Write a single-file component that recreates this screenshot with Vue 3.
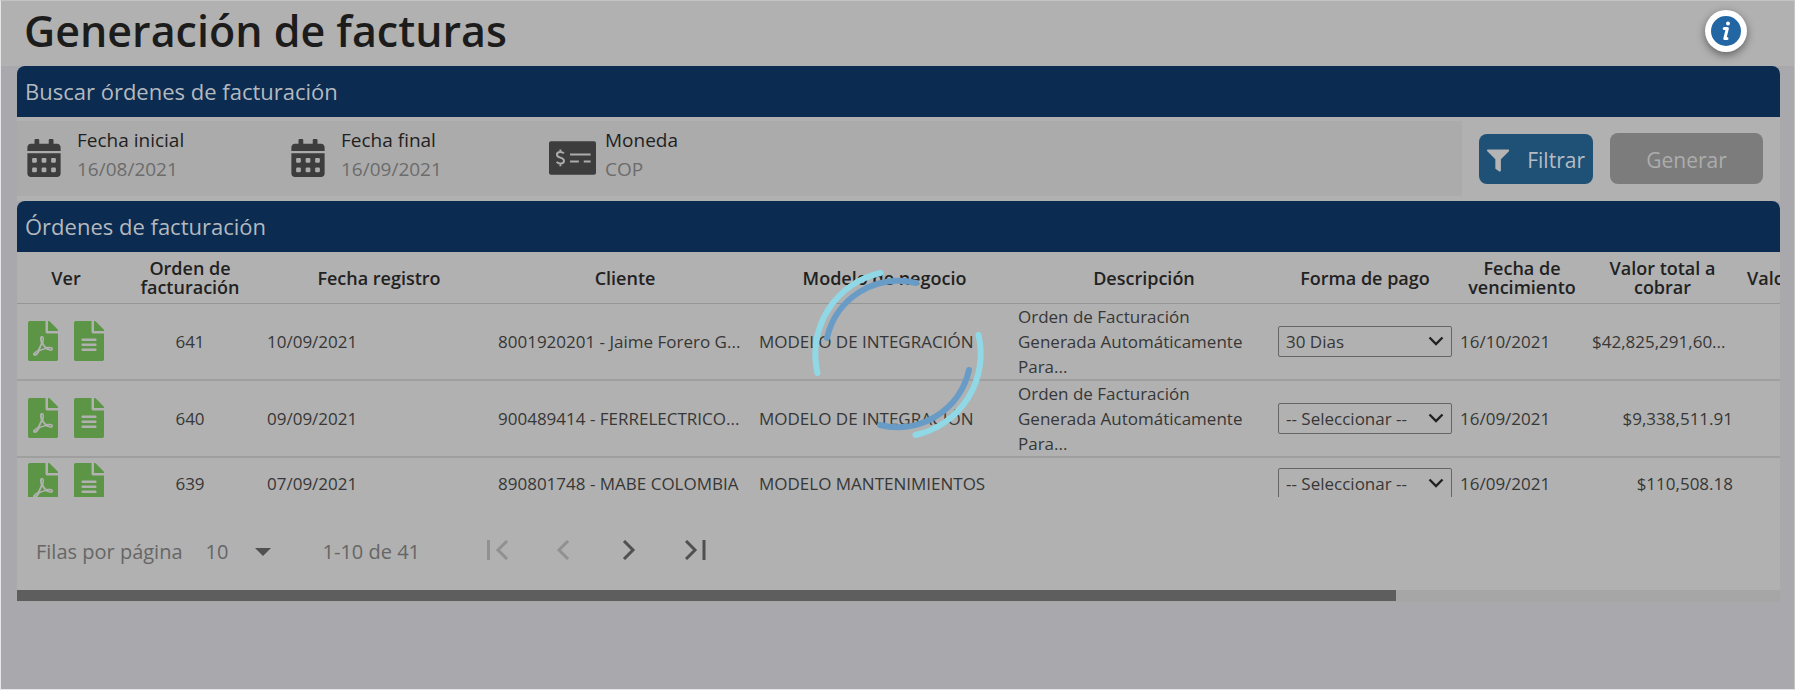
<script setup>
import { ref } from 'vue'

const filePdf = 'M181.9 256.1c-5-16-4.9-46.9-2-46.9 8.4 0 7.6 36.9 2 46.9zm-1.7 47.2c-7.7 20.2-17.3 43.3-28.4 62.7 18.3-7 39-17.2 62.9-21.9-12.7-9.6-24.9-23.4-34.5-40.8zM86.1 428.1c0 .8 13.2-5.4 34.9-40.2-6.7 6.3-29.1 24.5-34.9 40.2zM248 160h136v328c0 13.3-10.7 24-24 24H24c-13.3 0-24-10.7-24-24V24C0 10.7 10.7 0 24 0h200v136c0 13.2 10.8 24 24 24zm-8 171.8c-20-12.2-33.3-29-42.7-53.8 4.5-18.5 11.6-46.6 6.2-64.2-4.7-29.4-42.4-26.5-47.8-6.8-5 18.3-.4 44.1 8.1 77-11.6 27.6-28.7 64.6-40.8 85.8-.1 0-.1.1-.2.1-27.1 13.9-73.6 44.5-54.5 68 5.6 6.9 16 10 21.5 10 17.9 0 35.7-18 61.1-61.8 25.8-8.5 54.1-19.1 79-23.2 21.7 11.8 47.1 19.5 64 19.5 29.2 0 31.2-32 19.7-43.4-13.9-13.6-54.3-9.7-73.6-7.2zM377 105L279 7c-4.5-4.5-10.6-7-17-7h-6v128h128v-6.1c0-6.3-2.5-12.4-7-16.9zm-74.1 255.3c4.1-2.7-2.5-11.9-42.8-9 37.1 15.8 42.8 9 42.8 9z'
const fileAlt = 'M224 136V0H24C10.7 0 0 10.7 0 24v464c0 13.3 10.7 24 24 24h336c13.3 0 24-10.7 24-24V160H248c-13.2 0-24-10.8-24-24zm64 236c0 6.6-5.4 12-12 12H108c-6.6 0-12-5.4-12-12v-8c0-6.6 5.4-12 12-12h168c6.6 0 12 5.4 12 12v8zm0-64c0 6.6-5.4 12-12 12H108c-6.6 0-12-5.4-12-12v-8c0-6.6 5.4-12 12-12h168c6.6 0 12 5.4 12 12v8zm0-72v8c0 6.6-5.4 12-12 12H108c-6.6 0-12-5.4-12-12v-8c0-6.6 5.4-12 12-12h168c6.6 0 12 5.4 12 12zm96-114.1v6.1H256V0h6.1c6.4 0 12.5 2.5 17 7l97.9 98c4.5 4.5 7 10.6 7 16.9z'
const calendar = 'M0 464c0 26.5 21.5 48 48 48h352c26.5 0 48-21.5 48-48V192H0v272zm320-196c0-6.6 5.4-12 12-12h40c6.6 0 12 5.4 12 12v40c0 6.6-5.4 12-12 12h-40c-6.6 0-12-5.4-12-12v-40zm0 128c0-6.6 5.4-12 12-12h40c6.6 0 12 5.4 12 12v40c0 6.6-5.4 12-12 12h-40c-6.6 0-12-5.4-12-12v-40zM192 268c0-6.6 5.4-12 12-12h40c6.6 0 12 5.4 12 12v40c0 6.6-5.4 12-12 12h-40c-6.6 0-12-5.4-12-12v-40zm0 128c0-6.6 5.4-12 12-12h40c6.6 0 12 5.4 12 12v40c0 6.6-5.4 12-12 12h-40c-6.6 0-12-5.4-12-12v-40zM64 268c0-6.6 5.4-12 12-12h40c6.6 0 12 5.4 12 12v40c0 6.6-5.4 12-12 12H76c-6.6 0-12-5.4-12-12v-40zm0 128c0-6.6 5.4-12 12-12h40c6.6 0 12 5.4 12 12v40c0 6.6-5.4 12-12 12H76c-6.6 0-12-5.4-12-12v-40zM400 64h-48V16c0-8.8-7.2-16-16-16h-32c-8.8 0-16 7.2-16 16v48H160V16c0-8.8-7.2-16-16-16h-32c-8.8 0-16 7.2-16 16v48H48C21.5 64 0 85.5 0 112v48h448v-48c0-26.5-21.5-48-48-48z'
const funnel = 'M487.976 0H24.028C2.71 0-8.047 25.866 7.058 40.971L192 225.941V432c0 7.831 3.821 15.17 10.237 19.662l80 55.98C298.02 518.69 320 507.493 320 487.98V225.941l184.947-184.97C520.021 25.896 509.338 0 487.976 0z'

const columns = ['Ver', 'Orden de facturación', 'Fecha registro', 'Cliente', 'Modelo de negocio', 'Descripción', 'Forma de pago', 'Fecha de vencimiento', 'Valor total a cobrar', 'Valor pendiente']
const description = 'Orden de Facturación Generada Automáticamente Para...'
const orders = ref([
  { id: 641, date: '10/09/2021', client: '8001920201 - Jaime Forero G...', model: 'MODELO DE INTEGRACIÓN', description, payment: '30 Dias', due: '16/10/2021', total: '$42,825,291,60...', cut: true },
  { id: 640, date: '09/09/2021', client: '900489414 - FERRELECTRICO...', model: 'MODELO DE INTEGRACIÓN', description, payment: '-- Seleccionar --', due: '16/09/2021', total: '$9,338,511.91' },
  { id: 639, date: '07/09/2021', client: '890801748 - MABE COLOMBIA', model: 'MODELO MANTENIMIENTOS', description: '', payment: '-- Seleccionar --', due: '16/09/2021', total: '$110,508.18' }
])
const paymentOptions = ['-- Seleccionar --', '30 Dias']
const startDate = ref('16/08/2021')
const endDate = ref('16/09/2021')
const currency = ref('COP')
const pageSize = ref('10')
</script>

<template>
  <div class="page">
    <header class="page-header">
      <h1>Generación de facturas</h1>
      <button class="info" type="button" aria-label="Información">
        <svg viewBox="0 0 30 30" aria-hidden="true">
          <circle cx="15" cy="15" r="15" fill="#2267a3" />
          <circle cx="17" cy="7.6" r="2" fill="#fff" />
          <path d="M13.2 12.4h3.2l-2.6 10.2h2.2" fill="none" stroke="#fff" stroke-width="3" stroke-linecap="round" stroke-linejoin="round" />
        </svg>
      </button>
    </header>

    <main>
      <h2>Buscar órdenes de facturación</h2>
      <form class="search" @submit.prevent>
        <div class="fields">
          <div class="field">
            <svg class="calendar" viewBox="0 0 448 512" aria-hidden="true"><path :d="calendar" /></svg>
            <div class="field-text">
              <label for="start">Fecha inicial</label>
              <input id="start" v-model="startDate" type="text" />
            </div>
          </div>
          <div class="field">
            <svg class="calendar" viewBox="0 0 448 512" aria-hidden="true"><path :d="calendar" /></svg>
            <div class="field-text">
              <label for="end">Fecha final</label>
              <input id="end" v-model="endDate" type="text" />
            </div>
          </div>
          <div class="field money">
            <svg viewBox="0 0 48 34" aria-hidden="true">
              <rect width="48" height="34" rx="2" />
              <g fill="none" stroke="#acacac" stroke-width="2">
                <path d="M15.2 12.4c-1-1.2-2.4-1.6-3.8-1.6-2 0-3.3 1.1-3.3 2.8 0 3.8 7.2 2.3 7.2 6.2 0 1.8-1.5 2.9-3.5 2.9-1.5 0-3-.5-4-1.7M11.6 8.2v2.6M11.6 22.7v2.6" />
                <path d="M21.5 13.5h21M21.5 20.5h9M35.5 20.5h7" />
              </g>
            </svg>
            <div class="field-text">
              <label for="currency">Moneda</label>
              <input id="currency" v-model="currency" type="text" />
            </div>
          </div>
        </div>
        <div class="actions">
          <button class="filter" type="submit">
            <svg viewBox="0 0 512 512" aria-hidden="true"><path :d="funnel" /></svg>
            Filtrar
          </button>
          <button class="generate" type="button" disabled>Generar</button>
        </div>
      </form>

      <h2>Órdenes de facturación</h2>
      <section class="results">
        <div class="table-scroll">
          <table>
            <colgroup>
              <col v-for="(name, i) in columns" :key="name" :class="'c' + i" />
            </colgroup>
            <thead>
              <tr><th v-for="name in columns" :key="name" scope="col">{{ name }}</th></tr>
            </thead>
            <tbody>
              <tr v-for="order in orders" :key="order.id">
                <td>
                  <div class="files">
                    <a href="#" :aria-label="'PDF de la orden ' + order.id"><svg viewBox="0 0 384 512"><path :d="filePdf" /></svg></a>
                    <a href="#" :aria-label="'Detalle de la orden ' + order.id"><svg viewBox="0 0 384 512"><path :d="fileAlt" /></svg></a>
                  </div>
                </td>
                <td class="number">{{ order.id }}</td>
                <td>{{ order.date }}</td>
                <td class="client">{{ order.client }}</td>
                <td>{{ order.model }}</td>
                <td class="description">{{ order.description }}</td>
                <td>
                  <div class="select">
                    <select v-model="order.payment" :aria-label="'Forma de pago de la orden ' + order.id">
                      <option v-for="option in paymentOptions" :key="option">{{ option }}</option>
                    </select>
                    <svg viewBox="0 0 16 10" aria-hidden="true"><path d="M1.5 1.5 8 8l6.5-6.5" fill="none" stroke="#222" stroke-width="2.4" /></svg>
                  </div>
                </td>
                <td class="due">{{ order.due }}</td>
                <td class="total" :class="{ cut: order.cut }">{{ order.total }}</td>
                <td></td>
              </tr>
            </tbody>
          </table>
        </div>
        <nav class="pager" aria-label="Paginación">
          <label for="size">Filas por página</label>
          <div class="size">
            <select id="size" v-model="pageSize">
              <option>10</option>
              <option>25</option>
            </select>
            <svg viewBox="0 0 16 8" aria-hidden="true"><path d="M0 0h16L8 8z" fill="#505050" /></svg>
          </div>
          <span class="range">1-10 de 41</span>
          <div class="steps">
            <button type="button" disabled aria-label="Primera página"><svg viewBox="0 0 22 20"><path d="M1.5 0v20M20 1l-9 9 9 9" /></svg></button>
            <button type="button" disabled aria-label="Página anterior"><svg viewBox="0 0 22 20"><path d="m15 1-9 9 9 9" /></svg></button>
            <button type="button" aria-label="Página siguiente"><svg viewBox="0 0 22 20"><path d="m5 1 9 9-9 9" /></svg></button>
            <button type="button" aria-label="Última página"><svg viewBox="0 0 22 20"><path d="m1 1 9 9-9 9M19 0v20" /></svg></button>
          </div>
        </nav>
        <div class="scrollbar"><div class="thumb"></div></div>
      </section>
    </main>

    <div class="loader" role="status" aria-label="Cargando">
      <svg viewBox="-90 -90 180 180" aria-hidden="true">
        <g fill="none" stroke-width="6" stroke-linecap="round">
          <path stroke="#90d8e6" d="M-17.5-81A83 83 0 0 0-80.5 19M80.5-19A83 83 0 0 1 17.5 81" />
          <path stroke="#689cc6" d="M18-71A73 73 0 0 0-71-16M71 16A73 73 0 0 1-18 71" />
        </g>
      </svg>
    </div>
  </div>
</template>

<style>
html, body { margin: 0; background: #a9a8ad; }
</style>

<style scoped>
* { box-sizing: border-box; }
.page {
  min-height: 100vh;
  border: 1px solid #c4c4c4;
  border-left-color: #e6e6ea;
  border-bottom-color: #e6e6ea;
  background: #a9a8ad;
  color: #373737;
  font: 17px/25px "Open Sans", "Noto Sans", sans-serif;
}
button, input, select { font: inherit; color: inherit; }
svg { display: block; }
.page-header {
  display: flex;
  align-items: center;
  justify-content: space-between;
  height: 65px;
  padding: 0 47px 6px 23px;
  background: #b1b1b1;
}
h1 { margin: 0; color: #1c1c1c; font-size: 43px; line-height: 56px; font-weight: 600; }
.info {
  display: grid;
  place-items: center;
  width: 42px;
  height: 42px;
  padding: 0;
  border: 0;
  border-radius: 50%;
  background: #fff;
  box-shadow: 0 3px 8px rgba(0, 0, 0, .45);
}
.info svg { width: 30px; height: 30px; }
main { margin: 0 14px 0 16px; }
h2 {
  margin: 0;
  padding: 0 8px;
  border-radius: 8px 8px 0 0;
  background: #0b2b50;
  color: #b4b9bf;
  font-size: 22px;
  line-height: 51px;
  font-weight: 400;
}
.search { display: flex; height: 84px; padding: 4px 0 5px; background: #b1b1b1; }
.fields { display: flex; flex: 1; background: #ababab; }
.field { display: flex; width: 264px; padding-left: 10px; fill: #3d3d3d; }
.calendar { width: 34px; height: 38px; margin: 18px 16px 0 0; }
.field-text { flex: 1; min-width: 0; padding-top: 5px; font-size: 19px; line-height: 29px; }
.field label { display: block; color: #1f1f1f; height: 29px; }
.field input { display: block; width: 100%; height: 29px; padding: 0; border: 0; background: none; color: #6c6c6c; outline: 0; }
.money { padding-left: 4px; }
.money svg { width: 47px; height: 34px; margin: 20px 9px 0 0; }
.actions { display: flex; gap: 17px; padding: 12px 17px 0; width: 318px; }
.actions button { height: 50px; border: 0; border-radius: 8px; font-size: 21px; }
.actions .filter { display: flex; align-items: center; width: 114px; gap: 18px; padding: 2px 8px 0; margin-top: 1px; background: #1f5076; color: #b6bcc2; }
.filter svg { width: 23px; height: 23px; fill: #b4b4b4; }
.actions .generate { flex: 1; height: 51px; padding: 3px 0 0; background: #7c7c7c; color: #acacac; }
.results { background: #b1b1b1; }
.table-scroll { height: 245px; overflow: hidden; }
table { width: 1878px; table-layout: fixed; border-collapse: collapse; }
.c0 { width: 98px; }
.c1 { width: 150px; }
.c2 { width: 228px; }
.c3 { width: 264px; }
.c4 { width: 255px; }
.c5 { width: 264px; }
.c6 { width: 178px; }
.c7 { width: 136px; }
.c8 { width: 145px; }
.c9 { width: 160px; }
th {
  height: 51px;
  padding: 2px 12px 0;
  color: #222;
  font-size: 18px;
  line-height: 19px;
  font-weight: 600;
}
th:last-child { white-space: nowrap; }
tr { border-bottom: 1px solid #969696; }
tbody tr { border-bottom: 2px solid #9f9f9f; }
td { height: 53px; padding: 0 2px; white-space: nowrap; }
.files { display: flex; gap: 16px; padding-left: 9px; }
.files svg { width: 30px; height: 40px; fill: #5c9546; }
.number { text-align: center; }
.client { padding-left: 5px; }
.description { padding-left: 6px; padding-right: 20px; white-space: normal; }
.due { padding-left: 6px; }
.total { text-align: right; }
.cut { padding-right: 12px; }
.select, .size { display: grid; align-items: center; }
select { grid-area: 1 / 1; appearance: none; margin: 0; background: none; outline: 0; }
.select select { width: 100%; height: 31px; padding: 0 7px; border: 1px solid #666; border-radius: 2px; line-height: 25px; }
.select svg { grid-area: 1 / 1; justify-self: end; width: 16px; height: 10px; margin-right: 8px; pointer-events: none; }
.pager { display: flex; align-items: center; height: 93px; padding: 16px 19px 0; color: #666; font-size: 20px; }
.size { width: 65px; margin: 0 52px 0 23px; }
.size select { width: 100%; padding: 0; border: 0; }
.size svg { grid-area: 1 / 1; justify-self: end; width: 16px; height: 8px; pointer-events: none; }
.range { width: 100px; white-space: nowrap; }
.steps { display: flex; gap: 44px; margin-left: 64px; padding-bottom: 4px; }
.steps button { padding: 0; border: 0; background: none; }
.steps svg { width: 22px; height: 20px; fill: none; stroke: #505050; stroke-width: 3; }
.steps button:disabled svg { stroke: #919191; }
.scrollbar { height: 12px; background: #a6a6a6; }
.thumb { width: 78.2%; height: 11px; background: #5e5e5e; }
.loader { position: fixed; inset: 0; display: grid; place-items: center; padding-top: 18px; pointer-events: none; }
.loader svg { width: 180px; height: 180px; }
</style>
